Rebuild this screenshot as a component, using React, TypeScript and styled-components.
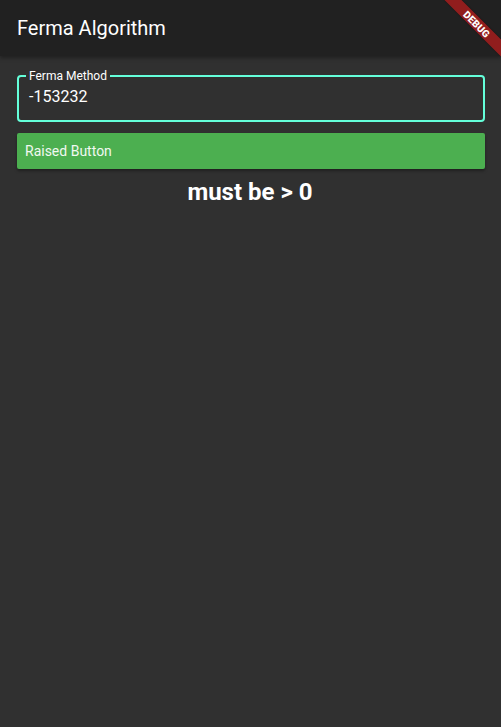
import React from "react";
import styled, { createGlobalStyle } from "styled-components";

const Global = createGlobalStyle`
  html, body { margin: 0; padding: 0; background: #303030; }
  body { font-family: Roboto, "Noto Sans", sans-serif; }
  * { box-sizing: border-box; }
`;

const Screen = styled.div`
  position: relative;
  width: 501px;
  height: 727px;
  background: #303030;
  overflow: hidden;
  display: flex;
  flex-direction: column;
`;

const AppBar = styled.header`
  height: 56px;
  background: #212121;
  display: flex;
  align-items: center;
  padding: 0 17px;
  box-shadow: 0 2px 4px rgba(0, 0, 0, 0.35);
  z-index: 1;
`;

const Title = styled.h1`
  margin: 0;
  font-size: 20px;
  font-weight: 400;
  color: #ffffff;
  letter-spacing: 0;
`;

const Body = styled.main`
  flex: 1;
  display: flex;
  flex-direction: column;
  padding: 15px 16px 0 17px;
`;

const Field = styled.fieldset`
  margin: 0;
  height: 51px;
  border: 2px solid #64ffda;
  border-radius: 4px;
  padding: 0 10px;
  display: flex;
  align-items: flex-start;
  position: relative;
`;

const Legend = styled.legend`
  font-size: 12px;
  color: #ffffff;
  padding: 0 3px;
  margin-left: -3px;
  line-height: 10px;
  height: 10px;
`;

const Value = styled.div`
  font-size: 16px;
  color: #ffffff;
  margin-top: 6px;
  line-height: 20px;
`;

const Button = styled.button`
  margin-top: 11px;
  height: 36px;
  border: none;
  border-radius: 2px;
  background: #4caf50;
  color: #f1f8f1;
  font-family: Roboto, "Noto Sans", sans-serif;
  font-size: 14px;
  text-align: left;
  padding: 0 8px;
  box-shadow: 0 2px 3px rgba(0, 0, 0, 0.35);
`;

const Message = styled.div`
  margin-top: 9px;
  text-align: center;
  font-size: 24px;
  font-weight: 700;
  color: #ffffff;
  line-height: 28px;
  padding-right: 2px;
`;

const Banner = styled.div`
  position: absolute;
  left: 437px;
  top: 18px;
  width: 80px;
  height: 12px;
  background: rgba(183, 28, 28, 0.75);
  transform: rotate(45deg);
  display: flex;
  align-items: center;
  justify-content: center;
  color: #ffffff;
  font-size: 10px;
  font-weight: 900;
  letter-spacing: 0.2px;
  z-index: 2;
  box-shadow: 0 0 2px rgba(0, 0, 0, 0.4);
`;

export default function App() {
  return (
    <>
      <Global />
      <Screen>
        <AppBar>
          <Title>Ferma Algorithm</Title>
        </AppBar>
        <Body>
          <Field>
            <Legend>Ferma Method</Legend>
            <Value>-153232</Value>
          </Field>
          <Button>Raised Button</Button>
          <Message>must be &gt; 0</Message>
        </Body>
        <Banner>DEBUG</Banner>
      </Screen>
    </>
  );
}
